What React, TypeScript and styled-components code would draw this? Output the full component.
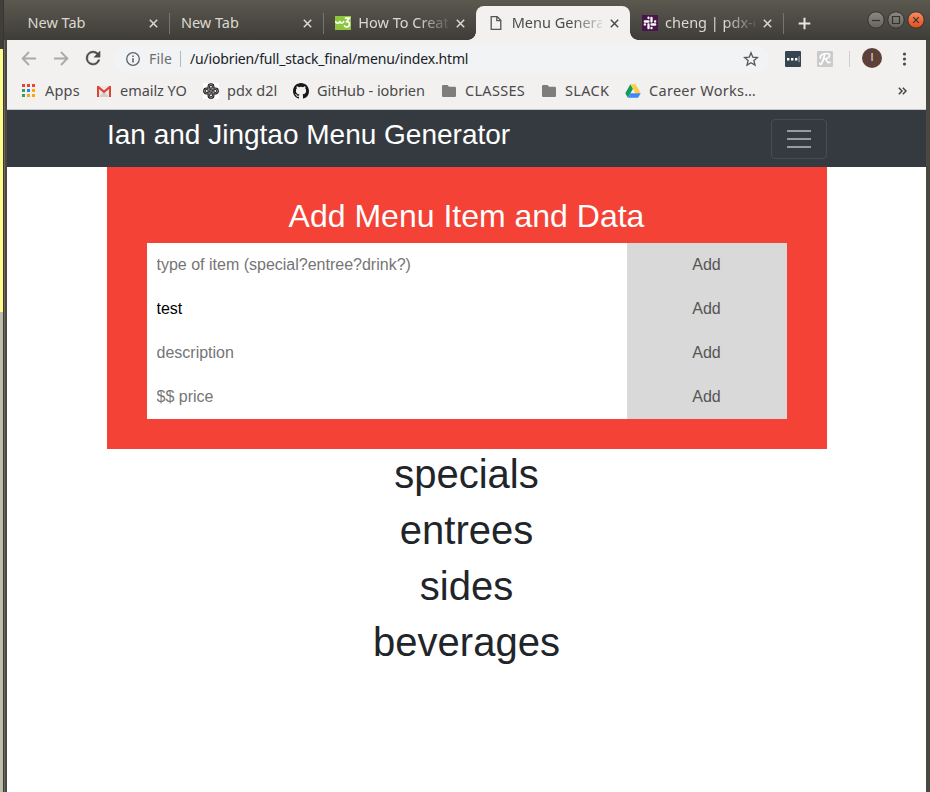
import React from "react";
import styled, { createGlobalStyle, css } from "styled-components";

const GlobalStyle = createGlobalStyle`
  *, *::before, *::after { box-sizing: border-box; }
  body { margin: 0; background: #fff; overflow: hidden; }
  svg { flex-shrink: 0; }
`;

const uiFont = `"Noto Sans", "Open Sans", sans-serif`;
const pageFont = `"Liberation Sans", Arial, sans-serif`;

const Desktop = styled.div`
  display: flex;
  width: 930px;
  height: 792px;
  overflow: hidden;
  font-family: ${uiFont};
`;

const BehindStrip = styled.div`
  flex: 0 0 3px;
  background: linear-gradient(#3f3e39 0 49px, #fffd8c 49px 312px, #bdbda9 312px);
`;

const Window = styled.div`
  flex: 1;
  min-width: 0;
  display: flex;
  flex-direction: column;
  background: linear-gradient(90deg, #3a3934 0 1px, #6a6860 1px 2px, #4a4840 2px);
`;

const TabStrip = styled.div`
  flex: 0 0 40px;
  display: flex;
  align-items: flex-end;
  padding-left: 12px;
  background: linear-gradient(#5b584f, #3e3d38);
  border-left: 1px solid #37362f;
`;

const TabBox = styled.div<{ $active?: boolean; $divided?: boolean }>`
  position: relative;
  flex: 0 0 153.4px;
  min-width: 0;
  height: 34px;
  display: flex;
  align-items: center;
  gap: 8px;
  padding: 0 11px 0 12px;
  color: ${(p) => (p.$active ? "#4c4c4c" : "#dcd9d0")};
  border-radius: 8px 8px 0 0;
  ${(p) => p.$active && css`
    background: #f2f1f0;
    &::before, &::after {
      content: "";
      position: absolute;
      bottom: 0;
      width: 8px;
      height: 8px;
    }
    &::before { left: -8px; background: radial-gradient(circle at 0 0, transparent 7.5px, #f2f1f0 8px); }
    &::after { right: -8px; background: radial-gradient(circle at 100% 0, transparent 7.5px, #f2f1f0 8px); }
  `}
  ${(p) => p.$divided && css`
    &::after {
      content: "";
      position: absolute;
      right: -0.8px;
      top: 7px;
      width: 1px;
      height: 21px;
      background: #77746b;
    }
  `}
`;

const TabTitle = styled.span<{ $fade?: boolean }>`
  flex: 1;
  min-width: 0;
  margin: -2px 0 0 -0.5px;
  overflow: hidden;
  white-space: nowrap;
  font-size: 14.5px;
  line-height: 22px;
  ${(p) => p.$fade && css`mask-image: linear-gradient(90deg, #000 66%, transparent 106%);`}
`;

const NewTabButton = styled.div`
  align-self: center;
  display: flex;
  margin: 6px 0 0 15px;
`;

const WindowButtons = styled.div`
  display: flex;
  gap: 2px;
  margin: 0 5px 11px auto;
`;

const Interior = styled.div`
  flex: 1;
  display: flex;
  flex-direction: column;
  margin: 0 4px;
  background: #fff;
`;

const Toolbar = styled.div`
  flex: 0 0 37px;
  display: flex;
  align-items: center;
  padding-left: 12px;
  background: #f2f1f0;
`;

const NavButton = styled.div`
  flex: 0 0 32px;
  display: flex;
`;

const Omnibox = styled.div`
  flex: 0 0 654px;
  height: 28px;
  display: flex;
  align-items: center;
  padding: 0 10px;
  border-radius: 14px;
  background: #f1f3f5;
  font-size: 14px;
  white-space: nowrap;
`;

const Scheme = styled.span`
  width: 32px;
  margin-left: 8px;
  border-right: 1px solid #b5b7b9;
  line-height: 16px;
  color: #6b6e71;
  letter-spacing: 0.2px;
`;

const Address = styled.span`
  flex: 1;
  margin-left: 9px;
  color: #202124;
  letter-spacing: -0.16px;
`;

const Extensions = styled.div`
  flex: 1;
  display: flex;
  align-items: center;
  padding-left: 16px;
`;

const ExtensionIcon = styled.div<{ $bg: string }>`
  width: 16px;
  height: 16px;
  margin-right: 16px;
  border-radius: 1px;
  background: ${(p) => p.$bg};
  display: flex;
`;

const ToolbarDivider = styled.div`
  width: 1px;
  height: 16px;
  background: #cfcecd;
`;

const Avatar = styled.div`
  width: 20px;
  height: 20px;
  margin: -1px 20px 0 12px;
  border-radius: 50%;
  background: #5d4037;
  color: #e8e0dd;
  font-size: 11px;
  line-height: 20px;
  text-align: center;
  font-family: Roboto, sans-serif;
`;

const BookmarksBar = styled.div`
  flex: 0 0 33px;
  display: flex;
  align-items: center;
  padding: 0 19px 4px 14px;
  background: #f2f1f0;
  border-bottom: 1px solid #c5c8cc;
`;

const Bookmark = styled.div<{ $width: number; $spacing?: number }>`
  flex: 0 0 ${(p) => p.$width}px;
  display: flex;
  align-items: center;
  gap: 8px;
  color: #4a4a4a;
  font-size: 14.5px;
  line-height: 28px;
  white-space: nowrap;
  letter-spacing: ${(p) => p.$spacing ?? 0}px;
`;

const BookmarkLabel = styled.span`
  margin-top: -2px;
`;

const Overflow = styled.div`
  margin-left: auto;
  display: flex;
`;

const NavBar = styled.header`
  flex: 0 0 57px;
  display: flex;
  justify-content: space-between;
  align-items: flex-start;
  padding: 8px 99px 0 100px;
  background: #343a40;
  font-family: ${pageFont};
`;

const Brand = styled.h3`
  margin: 0;
  color: #fff;
  font-size: 28px;
  font-weight: 400;
  line-height: 33.6px;
`;

const Toggler = styled.button`
  width: 56px;
  height: 40px;
  margin-top: 1px;
  padding: 0;
  display: flex;
  flex-direction: column;
  align-items: center;
  justify-content: center;
  gap: 6px;
  background: transparent;
  border: 1px solid #484d53;
  border-radius: 4px;
`;

const TogglerBar = styled.span`
  width: 24px;
  height: 2px;
  background: #999c9f;
`;

const Content = styled.main`
  width: 720px;
  margin-left: 100px;
  font-family: ${pageFont};
  text-align: center;
`;

const MenuForm = styled.section`
  height: 282px;
  padding: 30px 40px;
  background: #f44336;
`;

const FormTitle = styled.h2`
  height: 38px;
  margin: 0 0 8px;
  padding-right: 1px;
  color: #fff;
  font-size: 32px;
  font-weight: 400;
  line-height: 38.4px;
`;

const FieldRow = styled.div`
  display: flex;
  height: 44px;
`;

const Field = styled.input`
  width: 480px;
  padding: 0 9.5px 1px;
  border: 0;
  border-radius: 0;
  outline: 0;
  background: #fff;
  color: #000;
  font: 16px ${pageFont};
  &::placeholder { color: #757575; opacity: 1; }
`;

const AddButton = styled.button`
  width: 160px;
  padding: 0 1px 1px 0;
  border: 0;
  background: #d9d9d9;
  color: #555;
  font: 16px ${pageFont};
`;

const SectionHeading = styled.h1`
  margin: 0 0 8px;
  padding-right: 1px;
  color: #212529;
  font-size: 40px;
  font-weight: 400;
  line-height: 50px;
  height: 48px;
`;

const CloseIcon = ({ color }: { color: string }) => (
  <svg width="9" height="9" viewBox="0 0 9 9" stroke={color} strokeWidth="1.5" fill="none">
    <path d="M.8.8l7.4 7.4M8.2.8L.8 8.2" />
  </svg>
);

const W3Icon = () => (
  <svg width="16" height="16" viewBox="0 0 16 16" fill="none" stroke="#fff">
    <path d="M0 1h16v14H0z" fill="#8cc63f" stroke="none" />
    <path d="M.5 6.2q.6 2.3 2.3 2T4.7 6q.4 2.3 2 2.2T8.8 6" strokeWidth="1.6" />
    <path d="M9.8 3.2h4.4l-2.5 3.5q3 0 2.8 2.5T11.8 12q-2 0-2.7-1.8" strokeWidth="1.7" />
  </svg>
);

const FileIcon = () => (
  <svg width="16" height="16" viewBox="0 0 16 16" fill="none" stroke="#555" strokeWidth="1.3">
    <path d="M3.2 1.7h6l3.6 3.6v9.1H3.2zM8.8 1.7v4h4" />
  </svg>
);

const SlackIcon = () => (
  <svg width="16" height="16" viewBox="0 0 16 16">
    <path fill="#4a154b" d="M0 0h16v16H0z" />
    <g stroke="#fff" strokeWidth="2.3" strokeLinecap="round" fill="none">
      <path d="M6.5 2.7v.3M2.8 6.5h3.7M9.5 2.8v3.7M13 6.5h.2M2.8 9.5h.2M6.5 9.5v3.7M9.5 9.5h3.7M9.5 13v.2" />
    </g>
  </svg>
);

const PlusIcon = () => (
  <svg width="13" height="13" viewBox="0 0 13 13" stroke="#e9e6df" strokeWidth="2">
    <path d="M6.5.7v11.6M.7 6.5h11.6" />
  </svg>
);

type WindowAction = "minimize" | "maximize" | "close";

const actionShapes: Record<WindowAction, string> = {
  minimize: "M5 9.5h8",
  maximize: "M5.5 5.5h7v7h-7z",
  close: "M6.2 6.2l5.6 5.6M11.8 6.2l-5.6 5.6",
};

const WindowButton = ({ action }: { action: WindowAction }) => (
  <svg width="18" height="18" viewBox="0 0 18 18">
    <defs>
      <linearGradient id={`fill-${action}`} x2="0" y2="1">
        <stop stopColor={action === "close" ? "#f68e67" : "#8c8981"} />
        <stop offset="1" stopColor={action === "close" ? "#df4b18" : "#65635c"} />
      </linearGradient>
    </defs>
    <circle cx="9" cy="9" r="8.2" fill={`url(#fill-${action})`} stroke="#33322e" />
    <path d={actionShapes[action]} fill="none" stroke="#34332e" strokeWidth="1.2" />
  </svg>
);

const Arrow = ({ forward }: { forward?: boolean }) => (
  <svg width="20" height="20" viewBox="0 0 20 20" fill="none" stroke="#aaa9a8" strokeWidth="1.8">
    <path d={forward ? "M3 9.5h13M10 3l6.4 6.5L10 16" : "M17 9.5H4M10 3L3.6 9.5 10 16"} />
  </svg>
);

const ReloadIcon = () => (
  <svg width="21" height="21" viewBox="0.5 0.5 24 24" fill="#4a4a4a" stroke="#4a4a4a" strokeWidth="0.5">
    <path d="M17.65 6.35A7.96 7.96 0 0 0 12 4a8 8 0 1 0 7.73 10h-2.08A6 6 0 1 1 12 6c1.66 0 3.14.69 4.22 1.78L13 11h7V4z" />
  </svg>
);

const InfoIcon = () => (
  <svg width="16" height="16" viewBox="0 0 16 16" fill="none" stroke="#5f6368">
    <circle cx="8" cy="8" r="6.3" strokeWidth="1.3" />
    <path d="M8 7.2v4.2M8 4.4V6" strokeWidth="1.6" />
  </svg>
);

const StarIcon = () => (
  <svg width="16" height="16" viewBox="0 0 24 24" fill="none" stroke="#55585c" strokeWidth="2">
    <path d="M12 2.7l2.7 6.5 7 .6-5.3 4.6 1.6 6.8-6-3.6-6 3.6 1.6-6.8-5.3-4.6 7-.6z" />
  </svg>
);

const PasswordIcon = () => (
  <svg width="16" height="16" viewBox="0 0 16 16" fill="#fff">
    <path d="M2 7h2.4v2.4H2zM6 7h2.4v2.4H6zM10 7h2.4v2.4H10z" />
    <path d="M13.6 5.2h.9v6h-.9z" fill="#bfc6cb" />
  </svg>
);

const ScriptIcon = () => (
  <svg width="16" height="16" viewBox="0 0 16 16" fill="none" stroke="#fff" strokeWidth="1.7" strokeLinecap="round">
    <path d="M3.5 7.2C2.5 4 7 2.3 10.4 2.5c3.5.3 3 4.3-2 5.3 1.4 1.2 1.5 5 4.6 3.4M7.7 3.5C7 7 6 10 4.6 12.7c-.8 1-2 .7-1.8-.4" />
  </svg>
);

const DotsIcon = () => (
  <svg width="5" height="16" viewBox="0 0 5 16" fill="#4a4a4a">
    <circle cx="2.5" cy="3" r="1.6" />
    <circle cx="2.5" cy="8" r="1.6" />
    <circle cx="2.5" cy="13" r="1.6" />
  </svg>
);

const AppsIcon = () => (
  <svg width="16" height="16" viewBox="0 0 16 16">
    <path fill="#ea4335" d="M1 1h3v3H1zM6 1h3v3H6zM11 1h3v3h-3z" />
    <path fill="#34a060" d="M1 6h3v3H1zM1 11h3v3H1z" />
    <path fill="#2a84f5" d="M6 6h3v3H6z" />
    <path fill="#f9a80c" d="M11 6h3v3h-3zM6 11h3v3H6zM11 11h3v3h-3z" />
  </svg>
);

const GmailIcon = () => (
  <svg width="16" height="16" viewBox="0 0 16 16">
    <path fill="#e8e6e5" d="M1 3h14v11H1z" />
    <path fill="#d0cecd" d="M8 9l5 5H3z" />
    <path fill="#db4437" d="M1 3.6Q1.4 2.5 2.7 3L8 7.5 13.3 3q1.3-.5 1.7.6V14h-2V6L8 10.2 3 6v8H1z" />
  </svg>
);

const knotPath =
  "M5.8 9.5V3.6a2.2 2.2 0 0 1 4.4 0Q10.2 5.8 8 8M6.5 5.8h5.9a2.2 2.2 0 0 1 0 4.4Q10.2 10.2 8 8M10.2 6.5v5.9a2.2 2.2 0 0 1-4.4 0Q5.8 10.2 8 8M9.5 10.2H3.6a2.2 2.2 0 0 1 0-4.4Q5.8 5.8 8 8";

const KnotIcon = () => (
  <svg width="16" height="16" viewBox="0 0 16 16" fill="none">
    <path fill="#fff" d="M0 0h16v16H0z" />
    <path stroke="#111" strokeWidth="2.5" d={knotPath} />
    <path stroke="#ccc" strokeWidth=".6" d={knotPath} />
  </svg>
);

const GitHubIcon = () => (
  <svg width="16" height="16" viewBox="0 0 16 16" fill="#191717">
    <path d="M8 0C3.58 0 0 3.58 0 8c0 3.54 2.29 6.53 5.47 7.59.4.07.55-.17.55-.38 0-.19-.01-.82-.01-1.49-2.01.37-2.53-.49-2.69-.94-.09-.23-.48-.94-.82-1.13-.28-.15-.68-.52-.01-.53.63-.01 1.08.58 1.23.82.72 1.21 1.87.87 2.33.66.07-.52.28-.87.51-1.07-1.78-.2-3.64-.89-3.64-3.95 0-.87.31-1.59.82-2.15-.08-.2-.36-1.02.08-2.12 0 0 .67-.21 2.2.82a7.6 7.6 0 0 1 4 0c1.53-1.04 2.2-.82 2.2-.82.44 1.1.16 1.92.08 2.12.51.56.82 1.27.82 2.15 0 3.07-1.87 3.75-3.65 3.95.29.25.54.73.54 1.48 0 1.07-.01 1.93-.01 2.2 0 .21.15.46.55.38A8.01 8.01 0 0 0 16 8c0-4.42-3.58-8-8-8z" />
  </svg>
);

const FolderIcon = () => (
  <svg width="16" height="16" viewBox="0 0 16 16" fill="#7d7d7d">
    <path d="M1 3.2Q1 2 2.2 2h4.3L8 3.8h5.8Q15 3.8 15 5v7.8q0 1.2-1.2 1.2H2.2Q1 14 1 12.8z" />
  </svg>
);

const DriveIcon = () => (
  <svg width="16" height="16" viewBox="0 0 16 16">
    <path fill="#109d59" d="M5.4 1.2L8 5.8 2.9 14.8.3 10.2z" />
    <path fill="#ffcd40" d="M5.4 1.2h5.2l5.1 9h-5.2z" />
    <path fill="#4285f4" d="M5.5 10.2h10.2l-2.6 4.6H2.9z" />
  </svg>
);

const ChevronsIcon = () => (
  <svg width="9" height="8" viewBox="0 0 9 8" fill="none" stroke="#444" strokeWidth="1.5">
    <path d="M.8.8L4 4 .8 7.2M4.8.8L8 4 4.8 7.2" />
  </svg>
);

const tabs: { title: string; icon?: React.ReactNode; active?: boolean; divided?: boolean; fade?: boolean }[] = [
  { title: "New Tab", divided: true },
  { title: "New Tab", divided: true },
  { title: "How To Creat", icon: <W3Icon />, fade: true },
  { title: "Menu Genera", icon: <FileIcon />, active: true, fade: true },
  { title: "cheng | pdx-c", icon: <SlackIcon />, divided: true, fade: true },
];

const bookmarks = [
  { label: "Apps", icon: <AppsIcon />, width: 75, spacing: 0.2 },
  { label: "emailz YO", icon: <GmailIcon />, width: 107, spacing: -0.05 },
  { label: "pdx d2l", icon: <KnotIcon />, width: 90 },
  { label: "GitHub - iobrien", icon: <GitHubIcon />, width: 148, spacing: -0.05 },
  { label: "CLASSES", icon: <FolderIcon />, width: 100, spacing: 0.3 },
  { label: "SLACK", icon: <FolderIcon />, width: 84, spacing: 0.3 },
  { label: "Career Works…", icon: <DriveIcon />, width: 140, spacing: 0.3 },
];

const fields = [
  { placeholder: "type of item (special?entree?drink?)" },
  { placeholder: "name", value: "test" },
  { placeholder: "description" },
  { placeholder: "$$ price" },
];

const sections = ["specials", "entrees", "sides", "beverages"];

export default function App() {
  return (
    <Desktop>
      <GlobalStyle />
      <BehindStrip />
      <Window>
        <TabStrip>
          {tabs.map((tab, i) => (
            <TabBox key={i} $active={tab.active} $divided={tab.divided}>
              {tab.icon}
              <TabTitle $fade={tab.fade}>{tab.title}</TabTitle>
              <CloseIcon color={tab.active ? "#4c4c4c" : "#dcd9d0"} />
            </TabBox>
          ))}
          <NewTabButton><PlusIcon /></NewTabButton>
          <WindowButtons>
            <WindowButton action="minimize" />
            <WindowButton action="maximize" />
            <WindowButton action="close" />
          </WindowButtons>
        </TabStrip>
        <Interior>
          <Toolbar>
            <NavButton><Arrow /></NavButton>
            <NavButton><Arrow forward /></NavButton>
            <NavButton><ReloadIcon /></NavButton>
            <Omnibox>
              <InfoIcon />
              <Scheme>File</Scheme>
              <Address>/u/iobrien/full_stack_final/menu/index.html</Address>
              <StarIcon />
            </Omnibox>
            <Extensions>
              <ExtensionIcon $bg="#36454f"><PasswordIcon /></ExtensionIcon>
              <ExtensionIcon $bg="#cccbcb"><ScriptIcon /></ExtensionIcon>
              <ToolbarDivider />
              <Avatar>I</Avatar>
              <DotsIcon />
            </Extensions>
          </Toolbar>
          <BookmarksBar>
            {bookmarks.map((b) => (
              <Bookmark key={b.label} $width={b.width} $spacing={b.spacing}>
                {b.icon}
                <BookmarkLabel>{b.label}</BookmarkLabel>
              </Bookmark>
            ))}
            <Overflow><ChevronsIcon /></Overflow>
          </BookmarksBar>
          <NavBar>
            <Brand>Ian and Jingtao Menu Generator</Brand>
            <Toggler aria-label="Toggle navigation">
              <TogglerBar /><TogglerBar /><TogglerBar />
            </Toggler>
          </NavBar>
          <Content>
            <MenuForm>
              <FormTitle>Add Menu Item and Data</FormTitle>
              {fields.map((f) => (
                <FieldRow key={f.placeholder}>
                  <Field placeholder={f.placeholder} defaultValue={f.value} />
                  <AddButton>Add</AddButton>
                </FieldRow>
              ))}
            </MenuForm>
            {sections.map((s) => <SectionHeading key={s}>{s}</SectionHeading>)}
          </Content>
        </Interior>
      </Window>
    </Desktop>
  );
}
